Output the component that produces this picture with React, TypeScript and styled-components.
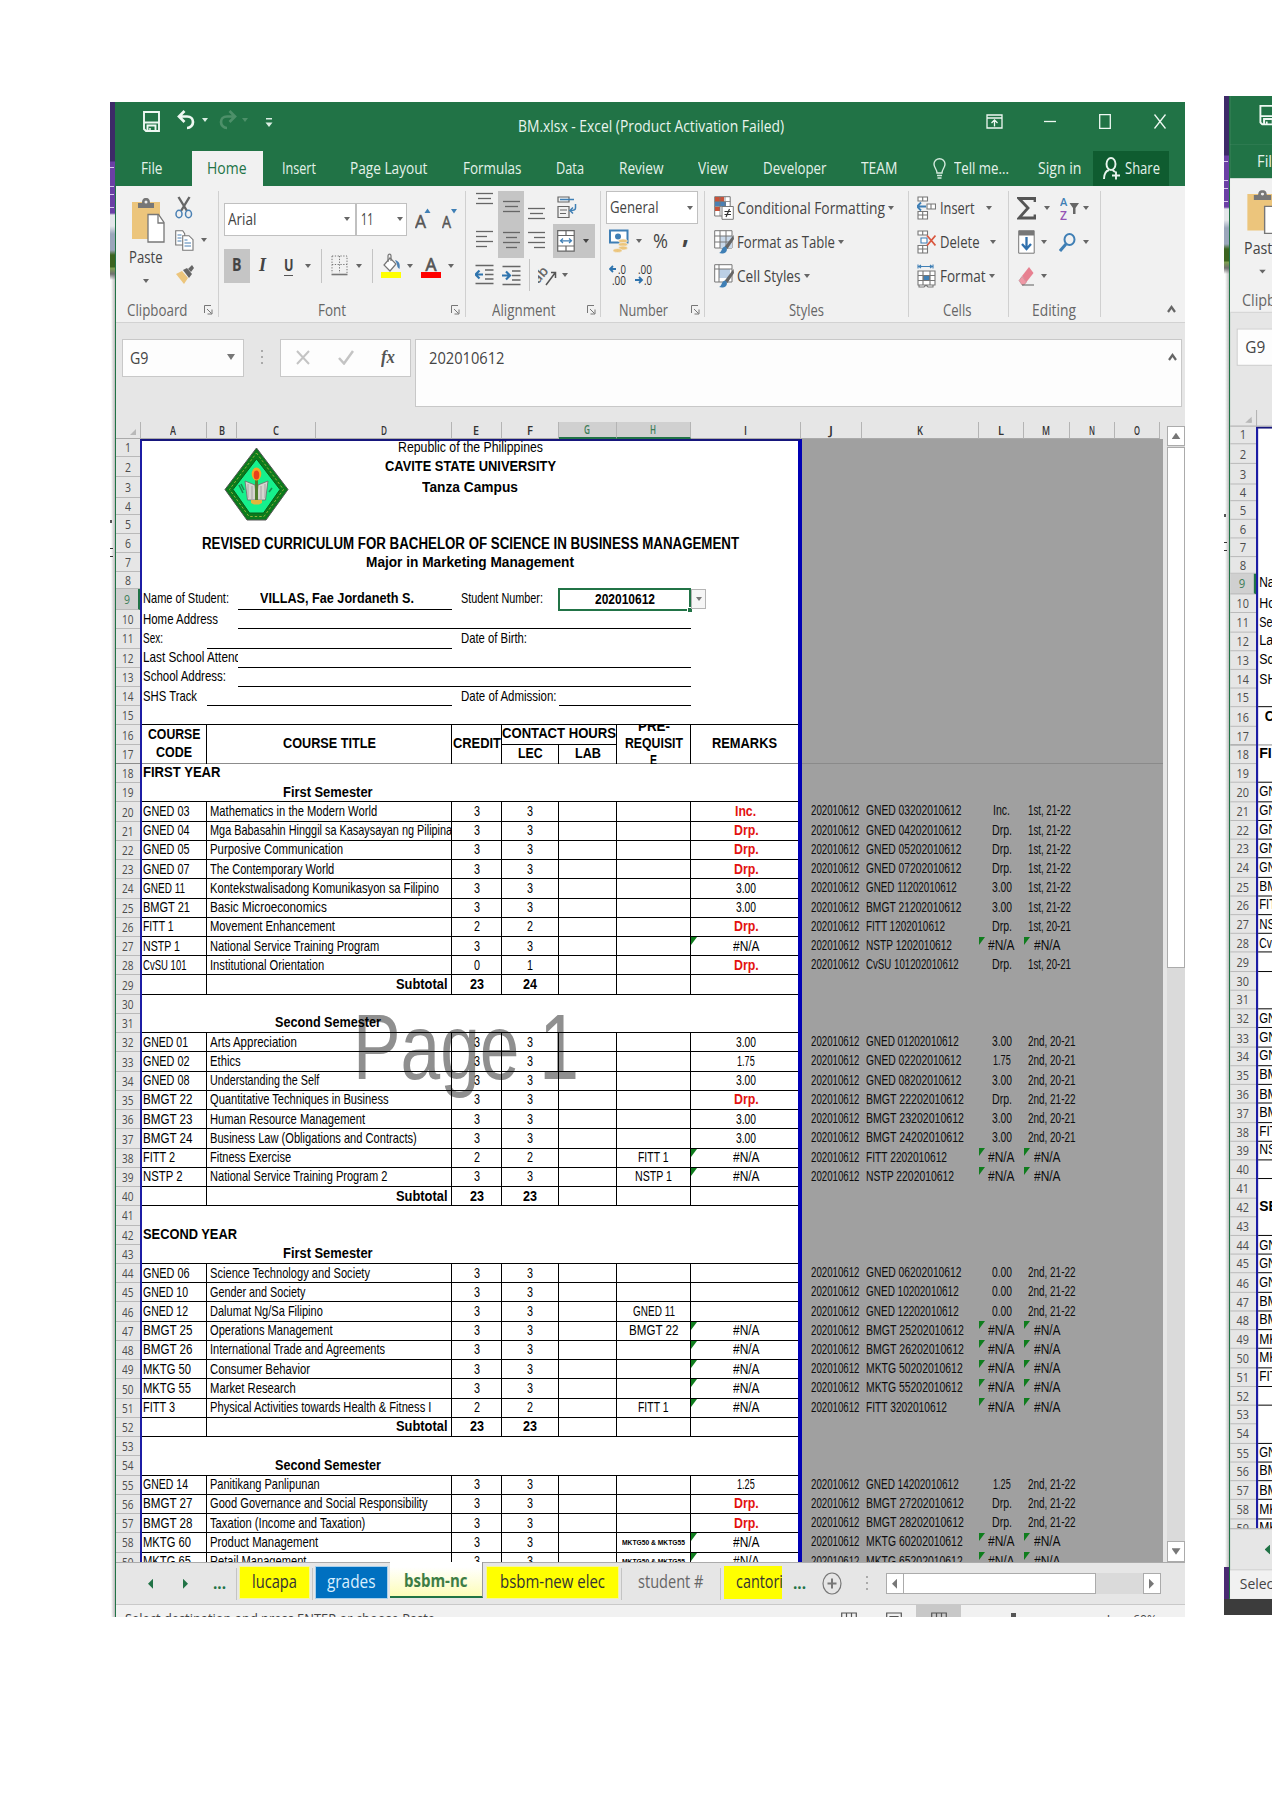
import React, { useLayoutEffect, useRef, useState } from "react";
import styled, { createGlobalStyle, css } from "styled-components";

const UI = `"Open Sans", "Noto Sans", sans-serif`;
const ARIAL = `"Liberation Sans", Arial, sans-serif`;
const GREEN = "#217346";

const Global = createGlobalStyle`
  html, body { margin: 0; background: #fff; overflow: hidden; }
  *, *::before, *::after { box-sizing: border-box; }
  svg { display: block; flex: none; }
`;

/* ---------- text condensed to a given width ---------- */

interface FitProps {
  w: number;
  ml?: number;
  size?: number;
  bold?: boolean;
  color?: string;
  font?: string;
  weight?: number;
  italic?: boolean;
  children: string;
}

const FitBox = styled.span<{ $w: number; $ml: number; $size: number; $weight: number; $color?: string; $font?: string; $italic?: boolean }>`
  display: block;
  flex: none;
  width: ${(p) => p.$w}px;
  margin-left: ${(p) => p.$ml}px;
  font-size: ${(p) => p.$size}px;
  font-weight: ${(p) => p.$weight};
  font-style: ${(p) => (p.$italic ? "italic" : "normal")};
  line-height: 1.2;
  white-space: pre;
  ${(p) => p.$color && css`color: ${p.$color};`}
  ${(p) => p.$font && css`font-family: ${p.$font};`}
`;
const FitText = styled.span`
  display: inline-block;
  transform-origin: 0 50%;
`;

function Fit({ w, ml = 0, size = 15.7, bold, weight, color, font, italic, children }: FitProps) {
  const box = useRef<HTMLSpanElement>(null);
  const text = useRef<HTMLSpanElement>(null);
  const [k, setK] = useState(1);
  useLayoutEffect(() => {
    if (!box.current || !text.current) return;
    const outer = box.current.getBoundingClientRect().width / w;
    const prev = text.current.style.transform;
    text.current.style.transform = "none";
    const natural = text.current.getBoundingClientRect().width / outer;
    text.current.style.transform = prev;
    if (natural > 0) setK(w / natural);
  }, [w, children]);
  return (
    <FitBox ref={box} $w={w} $ml={ml} $size={size} $weight={weight ?? (bold ? 700 : 400)} $color={color} $font={font} $italic={italic}>
      <FitText ref={text} style={{ transform: `scaleX(${k})` }}>{children}</FitText>
    </FitBox>
  );
}

/* ---------- desktop and window frames ---------- */

const Desktop = styled.main`
  display: flex;
  align-items: flex-start;
  width: 1272px;
  height: 1800px;
  padding-top: 96px;
  overflow: hidden;
  background: #fff;
  font-family: ${UI};
`;
const Frame = styled.section<{ $ml: number; $mt: number; $w: number; $h: number; $bg: string }>`
  display: flex;
  flex: none;
  align-items: flex-start;
  width: ${(p) => p.$w}px;
  height: ${(p) => p.$h}px;
  margin: ${(p) => p.$mt}px 0 0 ${(p) => p.$ml}px;
  overflow: hidden;
  background: ${(p) => p.$bg};
`;
const Wallpaper = styled.div<{ $w: number; $tail?: boolean }>`
  flex: none;
  width: ${(p) => p.$w}px;
  height: ${(p) => (p.$tail ? "1503px" : "100%")};
  background:
    ${(p) => p.$tail && "linear-gradient(#4a2a72, #4a2a72) 0 1471px / 100% 32px no-repeat,"}
    linear-gradient(#555, #555) 0 418px / 2px 3px no-repeat,
    linear-gradient(#333, #333) 0 446px / 3px 1px no-repeat,
    linear-gradient(#333, #333) 0 454px / 3px 1px no-repeat,
    linear-gradient(#d9c8ee, #d9c8ee) 0 65px / 4px 1px no-repeat,
    linear-gradient(#d9c8ee, #d9c8ee) 0 84px / 4px 1px no-repeat,
    linear-gradient(#d9c8ee, #d9c8ee) 0 92px / 4px 1px no-repeat,
    linear-gradient(#d9c8ee, #d9c8ee) 0 105px / 4px 1px no-repeat,
    linear-gradient(#3d2a68 0 59px, #6b40a5 60px 111px, #e4e6ea 113px 124px, #9ba6bb 132px 148px, #3c6420 153px 165px, #7fa050 166px, #707070 172px, transparent 178px 100%) 0 0 / 100% 180px no-repeat,
    linear-gradient(90deg, #fff 20%, #bcbcbc);
`;
const Scaler = styled.div<{ $sx: number; $sy: number }>`
  flex: none;
  transform-origin: 0 0;
  transform: scale(${(p) => p.$sx}, ${(p) => p.$sy});
`;
const Window = styled.div`
  display: flex;
  flex-direction: column;
  width: 1070px;
  height: 1532px;
  border-left: 1px solid ${GREEN};
  background: #e6e6e6;
  color: #444;
`;

/* ---------- title bar and ribbon tabs ---------- */

const TitleBar = styled.header`
  display: flex;
  align-items: center;
  flex: none;
  height: 48.5px;
  padding-bottom: 10px;
  background: ${GREEN};
  color: #e9f5ee;
`;
const Item = styled.div<{ $ml?: number; $mt?: number }>`
  flex: none;
  margin-left: ${(p) => p.$ml ?? 0}px;
  margin-top: ${(p) => p.$mt ?? 0}px;
`;
const Caret = styled.i<{ $ml?: number; $c?: string; $s?: number; $mt?: number }>`
  flex: none;
  width: 0;
  height: 0;
  margin-left: ${(p) => p.$ml ?? 0}px;
  margin-top: ${(p) => p.$mt ?? 0}px;
  border: ${(p) => p.$s ?? 3.2}px solid transparent;
  border-top: ${(p) => (p.$s ?? 3.2) * 1.4}px solid ${(p) => p.$c ?? "#666"};
  border-bottom: 0;
`;
const TabStrip = styled.nav`
  display: flex;
  align-items: stretch;
  flex: none;
  height: 35.7px;
  background: ${GREEN};
  color: #e4f2ea;
`;
const RibbonTab = styled.div<{ $w: number; $active?: boolean; $fill?: string; $pr?: number }>`
  display: flex;
  align-items: center;
  justify-content: center;
  flex: none;
  width: ${(p) => p.$w}px;
  padding-right: ${(p) => p.$pr ?? 0}px;
  background: ${(p) => (p.$active ? "#f1f1f1" : p.$fill ?? "transparent")};
  color: ${(p) => (p.$active ? GREEN : "inherit")};
`;

/* ---------- ribbon ---------- */

const Ribbon = styled.div`
  display: flex;
  flex: none;
  height: 137px;
  padding-top: 5px;
  border-bottom: 1.5px solid #d2d2d2;
  background: #f1f1f1;
`;
const Group = styled.section<{ $w: number; $last?: boolean }>`
  display: flex;
  flex-direction: column;
  flex: none;
  width: ${(p) => p.$w}px;
  height: 126px;
  border-right: ${(p) => (p.$last ? 0 : "1px solid #d0d0d0")};
`;
const GroupBody = styled.div`
  display: flex;
  flex: none;
  height: 109.5px;
`;
const GroupLabel = styled.footer`
  display: flex;
  align-items: center;
  height: 20px;
  color: #666;
`;
const ToolCol = styled.div<{ $ml?: number; $w?: number; $center?: boolean }>`
  display: flex;
  flex-direction: column;
  flex: none;
  align-items: ${(p) => (p.$center ? "center" : "stretch")};
  margin-left: ${(p) => p.$ml ?? 0}px;
  ${(p) => p.$w && css`width: ${p.$w}px;`}
`;
const ToolRow = styled.div<{ $h: number; $mt?: number; $pl?: number }>`
  display: flex;
  align-items: center;
  flex: none;
  height: ${(p) => p.$h}px;
  margin-top: ${(p) => p.$mt ?? 0}px;
  padding-left: ${(p) => p.$pl ?? 0}px;
`;
const Combo = styled.div<{ $w: number; $h: number; $pl: number; $ml?: number }>`
  display: flex;
  align-items: center;
  flex: none;
  width: ${(p) => p.$w}px;
  height: ${(p) => p.$h}px;
  margin-left: ${(p) => p.$ml ?? 0}px;
  padding-left: ${(p) => p.$pl}px;
  border: 1px solid #c0c0c0;
  background: #fff;
`;
const Pressed = styled.div<{ $w: number; $h: number; $ml?: number; $pl?: number }>`
  display: flex;
  align-items: center;
  justify-content: ${(p) => (p.$pl ? "flex-start" : "center")};
  flex: none;
  width: ${(p) => p.$w}px;
  height: ${(p) => p.$h}px;
  margin-left: ${(p) => p.$ml ?? 0}px;
  padding-left: ${(p) => p.$pl ?? 0}px;
  background: #c5c5c5;
`;
const Rule = styled.i<{ $ml: number; $h: number }>`
  flex: none;
  width: 1px;
  height: ${(p) => p.$h}px;
  margin-left: ${(p) => p.$ml}px;
  background: #c4c4c4;
`;
const Underlined = styled.div<{ $ml: number }>`
  flex: none;
  margin-left: ${(p) => p.$ml}px;
  border-bottom: 1.5px solid #555;
  line-height: 1;
`;

const Launcher = ({ ml }: { ml: number }) => (
  <Item $ml={ml}>
    <svg width="9" height="10" viewBox="0 0 9 10" fill="none" stroke="#777" strokeWidth="1">
      <path d="M.5 8V.5H7M3 4l4.5 4.5M8 4.5V9H3.5" />
    </svg>
  </Item>
);

const SaveIcon = () => (
  <svg width="17" height="21" viewBox="0 0 17 21" fill="none" stroke="#eef8f2" strokeWidth="1.900">
    <path d="M1 1h15v19H3L1 18zM1.500 11.500h14M4.500 20v-5.500h8V20" />
    <path d="M7 17v3" strokeWidth="1.500" />
  </svg>
);
const UndoIcon = ({ c, flip }: { c: string; flip?: boolean }) => (
  <svg width="18" height="20" viewBox="0 0 18 20" fill="none" stroke={c} strokeWidth="2.700">
    <g transform={flip ? "translate(18 0) scale(-1 1)" : undefined}>
      <path d="M7.500 1 2 6.500 7.500 12M2 6.500h8c4 0 6 2.500 6 5.500s-2.500 6-6 6" />
    </g>
  </svg>
);
const lines = (ws: number[], align: "l" | "c" | "r", gap = 5) => (
  <svg width="17" height={ws.length * gap + 1} stroke="#666" strokeWidth="1.300">
    {ws.map((w, i) => {
      const x = align === "l" ? 0 : align === "c" ? (17 - w) / 2 : 17 - w;
      return <path key={i} d={`M${x} ${i * gap + 1.5}h${w}`} />;
    })}
  </svg>
);
const PasteIcon = () => (
  <svg width="34" height="46" viewBox="0 0 34 46">
    <path d="M1 5h28v37H1z" fill="#ecc57c" />
    <path d="M7 11V6h4c0-3 1-5 4-5s4 2 4 5h4v5z" fill="#777" />
    <circle cx="15" cy="5" r="1.500" fill="#eee" />
    <path d="M17 17.500h10.500l5.500 8V45H17z" fill="#fff" stroke="#777" strokeWidth="1.300" />
    <path d="M27 17.500V26h6" fill="none" stroke="#777" strokeWidth="1.300" />
  </svg>
);
const CutIcon = () => (
  <svg width="18" height="23" viewBox="0 0 18 23" fill="none">
    <path d="M3.500 1 12 15M14.500 1 6 15" stroke="#666" strokeWidth="2.400" />
    <ellipse cx="4" cy="18" rx="3" ry="3.700" stroke="#4a80b4" strokeWidth="1.500" />
    <ellipse cx="13.500" cy="18" rx="3" ry="3.700" stroke="#4a80b4" strokeWidth="1.500" />
  </svg>
);
const CopyIcon = () => (
  <svg width="19" height="21" viewBox="0 0 19 21" fill="#fff" stroke="#777" strokeWidth="1.100">
    <path d="M.7.700h7l2 3V15h-9z" />
    <path d="M7.700 5.700H14l4 4v10.500H7.700z" />
    <path d="M2.500 5h4M2.500 8h4M2.500 11h4M9.500 10h3M9.500 13h6.500M9.500 16h6.500" stroke="#4a80b4" />
  </svg>
);
const BrushIcon = () => (
  <svg width="20" height="20" viewBox="0 0 20 20">
    <path d="M1 10 7 7l6 7-4 6z" fill="#ecc57c" />
    <path d="m8 6 4-2 5 6-3 4z" fill="#666" />
    <path d="m13 5 4-4 2 3-3 4z" fill="#666" />
  </svg>
);
const BordersIcon = () => (
  <svg width="17" height="21" viewBox="0 0 17 21" fill="none" stroke="#777">
    <path d="M1 1h15v17M1 1v17M8.500 1v17M1 9.500h15" strokeDasharray="1.300 1.500" />
    <path d="M.5 19.500h16" strokeWidth="1.600" />
  </svg>
);
const BucketIcon = () => (
  <svg width="20" height="25" viewBox="0 0 20 25">
    <path d="M9 5 15 11 9 18 3 12z" fill="#fff" stroke="#777" strokeWidth="1.200" />
    <path d="M7 9V3c0-2.500 3-2.500 3 0v5" fill="none" stroke="#777" strokeWidth="1.200" />
    <path d="M14 7c4 1 5.500 4 4.500 9-2-1-2.500-3-2.500-5z" fill="#4a80b4" />
    <path d="M0 19h20v6H0z" fill="#ff0" />
  </svg>
);
const WrapIcon = () => (
  <svg width="20" height="23" viewBox="0 0 20 23" fill="none" stroke="#666" strokeWidth="1.200">
    <path d="M1 1h11v5H1zM1 10.500h11v11H1zM3 14h7M3 17.500h6" />
    <path d="M3 3.500h14M18.500 8v4c0 2-2 2.500-5 2.500M16 11.500l-3 3 3 3" stroke="#3f7fb5" strokeWidth="1.500" />
  </svg>
);
const MergeIcon = () => (
  <svg width="18" height="22" viewBox="0 0 18 22" fill="#fff" stroke="#666" strokeWidth="1.200">
    <path d="M.7.700h16.500v20.500H.7zM.7 5.500h16.500M.7 16h16.500M9 .7v4.800M9 16v5.200" />
    <path d="M3.500 10.800h11M6 8.500l-2.500 2.300L6 13M12 8.500l2.500 2.300L12 13" fill="none" stroke="#3f7fb5" />
  </svg>
);
const IndentIcon = ({ out }: { out?: boolean }) => (
  <svg width="19" height="21" viewBox="0 0 19 21" fill="none" stroke="#666" strokeWidth="1.300">
    <path d="M.5 1.500h18M10 6h8.500M10 10.500h8.500M10 15h8.500M.5 19.500h18" />
    <path d={out ? "M0 10.500h8M4.500 6.500l-4 4 4 4" : "M0 10.500h8M4 6.500l4 4-4 4"} stroke="#2f74ae" strokeWidth="2.200" />
  </svg>
);
const AngleIcon = () => (
  <svg width="20" height="22" viewBox="0 0 20 22">
    <text x="-4" y="13" transform="rotate(-50 6 12)" fontFamily={UI} fontWeight="600" fontSize="14" fill="#666">ab</text>
    <path d="M8 21 17 9M17.500 14V8.500h-4.500" fill="none" stroke="#555" strokeWidth="1.500" />
  </svg>
);
const CashIcon = () => (
  <svg width="20" height="24" viewBox="0 0 20 24">
    <path d="M1 1.500h17.500v12H1z" fill="#fff" stroke="#3f7fb5" strokeWidth="2" />
    <circle cx="9" cy="7.500" r="3" fill="#3f7fb5" />
    <g fill="#ecc57c" stroke="#f1f1f1" strokeWidth=".6">
      <ellipse cx="14" cy="12" rx="4.500" ry="2" /><ellipse cx="14" cy="15.500" rx="4.500" ry="2" />
      <ellipse cx="14" cy="19" rx="4.500" ry="2" /><ellipse cx="8.500" cy="21.500" rx="4.500" ry="2" />
    </g>
  </svg>
);
const CondIcon = () => (
  <svg width="20" height="24" viewBox="0 0 20 24" stroke="#777">
    <path d="M.7.700h15.500V20H.7z" fill="#fff" />
    <path d="M1 1h9v5H1zM1 11h5v4H1z" fill="#c8523a" stroke="none" />
    <path d="M1 6h11v4H1z" fill="#4a80b4" stroke="none" />
    <path d="M.7 5.500h15.500M.7 10.500h15.500M6 .7V20M11 .7V20" fill="none" strokeWidth=".8" />
    <path d="M8 10.500h11.300v12.800H8z" fill="#fff" />
    <path d="M10.500 15.500h6.500M10.500 18.500h6.500M15.500 13l-3.500 8" stroke="#333" strokeWidth="1.200" />
  </svg>
);
const TableIcon = ({ cell }: { cell?: boolean }) => (
  <svg width="20" height="24" viewBox="0 0 20 24">
    <path d="M.7.700H18V18H.7z" fill="#fff" stroke="#777" />
    {cell ? <path d="M5 5h11v9H5z" fill="#bcd0e6" /> : <path d="M6 6h12v12H6z" fill="#c9d9ea" />}
    <path d={cell ? "M.7 5H18M5 .7V18" : "M.7 6H18M.7 12H18M6 .7V18M12 .7V18"} stroke="#777" fill="none" />
    <path d="m19.500 5-9 12 3 2L20 9z" fill="#666" />
    <path d="M5 23c3-1 2.500-6 6-6.500 3 1 2.500 6-1 6.800-2 .4-3.500.2-5-.3z" fill="#3f7fb5" />
  </svg>
);
const InsertIcon = ({ del }: { del?: boolean }) => (
  <svg width="19" height="24" viewBox="0 0 19 24" fill="#fff" stroke="#777" strokeWidth="1.100">
    <path d="M1 1h9.500v4H1zM5.700 1v4M1 15.500h9.500V23H1zM5.700 15.500V23M1 19h9.500" />
    {del ? (
      <>
        <path d="M4 8h6v5H4z" stroke="#3f7fb5" />
        <path d="m10 5.500 8.500 10M18.500 5.500 10 15.500" stroke="#d9573f" strokeWidth="1.800" />
      </>
    ) : (
      <>
        <path d="M10 8h8.500v5H10zM14 8v5" />
        <path d="M0 10.500h9M4 6.500l-4 4 4 4" stroke="#3f7fb5" fill="none" strokeWidth="1.800" />
      </>
    )}
  </svg>
);
const FormatIcon = () => (
  <svg width="19" height="24" viewBox="0 0 19 24" fill="none" stroke="#777" strokeWidth="1.100">
    <path d="M1 7h17v14H1zM1 11.500h17M1 16.500h17M6 7v14M13 7v14M2 21v2h5l2-2 2 2h5v-2" fill="#fff" />
    <path d="M6.500 11.500h6v5h-6z" fill="#3f7fb5" />
    <path d="M1 .5v4M16 .5v4M1 2.500h15M4 1 2 2.500 4 4M13 1l2 1.500L13 4" stroke="#3f7fb5" />
  </svg>
);
const SigmaIcon = () => (
  <svg width="19" height="23" viewBox="0 0 19 23" fill="none" stroke="#555" strokeWidth="2.800">
    <path d="M18 5V1.500H2L11 11 2 21h16v-3.500" />
  </svg>
);
const SortIcon = () => (
  <svg width="19" height="26" viewBox="0 0 19 26">
    <text x="0" y="11" fontFamily={UI} fontWeight="600" fontSize="11" fill="#3f7fb5">A</text>
    <text x="0" y="25" fontFamily={UI} fontWeight="600" fontSize="12" fill="#9554b5">Z</text>
    <path d="M9.500 8H19l-3.500 5v6h-2.500v-6z" fill="#666" />
  </svg>
);
const FillIcon = () => (
  <svg width="17" height="24" viewBox="0 0 17 24">
    <path d="M.7.700h15.500v22.500H.7z" fill="#fff" stroke="#777" />
    <path d="M1 1h15v4.500H1z" fill="#777" />
    <path d="M8.500 7v12M4 14l4.500 5 4.500-5" fill="none" stroke="#3070ad" strokeWidth="2.300" />
  </svg>
);
const FindIcon = () => (
  <svg width="17" height="19" viewBox="0 0 17 19" fill="none" stroke="#3f7fb5">
    <ellipse cx="10.500" cy="6.500" rx="5" ry="5.500" strokeWidth="2" />
    <path d="m7 11-6 7" strokeWidth="3" />
  </svg>
);
const EraserIcon = () => (
  <svg width="17" height="20" viewBox="0 0 17 20">
    <path d="m4 10 7-9 4.500 6-7 9z" fill="#e78090" />
    <path d="M4 10.500 1 14.500 4 19h2l2.500-3z" fill="#ef98a5" stroke="#b9808a" strokeWidth=".6" />
    <path d="M4 19h12" stroke="#777" strokeWidth="1.200" />
  </svg>
);
const FontSizeIcon = ({ up }: { up?: boolean }) => (
  <svg width="16" height="24" viewBox="0 0 16 24">
    <text x="0" y={21} fontFamily={UI} fontSize={up ? 19 : 16} textLength={up ? 11 : 9} lengthAdjust="spacingAndGlyphs" fill="#555" stroke="#555" strokeWidth=".5">A</text>
    <path d={up ? "m9.500 6 3-4.500 3 4.500z" : "m9 2 3 4.500L15 2z"} fill="#3f7fb5" />
  </svg>
);
const DecimalIcon = ({ inc }: { inc?: boolean }) => (
  <svg width="19" height="23" viewBox="0 0 19 23">
    <g fontFamily={UI} fontSize="12" fill="#333">
      <text x={inc ? 9 : 3} y="9.500" textLength={inc ? 8 : 14} lengthAdjust="spacingAndGlyphs">{inc ? ".0" : ".00"}</text>
      <text x={inc ? 3 : 9} y="21" textLength={inc ? 14 : 8} lengthAdjust="spacingAndGlyphs">{inc ? ".00" : ".0"}</text>
    </g>
    <path d={inc ? "M1 5h6M4 2 1 5l3 3" : "M0 16h7M4 13l3 3-3 3"} fill="none" stroke="#2f74ae" strokeWidth="1.800" />
  </svg>
);
const Chevron = () => (
  <svg width="9" height="8" viewBox="0 0 9 8" fill="none" stroke="#666" strokeWidth="2.200"><path d="m1 7 3.500-5L8 7" /></svg>
);

/* ---------- formula bar ---------- */

const FormulaArea = styled.div`
  display: flex;
  align-items: flex-start;
  flex: none;
  height: 98.700px;
  padding: 16px 0 0 6px;
`;
const FormulaBox = styled.div<{ $w: number; $h: number; $ml: number; $pl: number }>`
  display: flex;
  align-items: flex-start;
  flex: none;
  width: ${(p) => p.$w}px;
  height: ${(p) => p.$h}px;
  margin-left: ${(p) => p.$ml}px;
  padding: 9px 0 0 ${(p) => p.$pl}px;
  border: 1px solid #c8c8c8;
  background: #fdfdfd;
`;
const Dots = styled.i<{ $ml: number; $mt?: number }>`
  flex: none;
  width: 2px;
  height: 15px;
  margin: ${(p) => p.$mt ?? 0}px 0 0 ${(p) => p.$ml}px;
  background: repeating-linear-gradient(#aaa 0 2px, transparent 2px 6px);
`;

/* ---------- sheet ---------- */

const PITCH = 19.24;
const COLS = "65px 30.5px 79px 135.5px 50px 57px 58px 74px 107px";
const INK = "#000";

const SheetArea = styled.div`
  display: flex;
  flex: none;
  height: 1140.3px;
  overflow: hidden;
`;
const SheetMain = styled.div`
  display: flex;
  flex-direction: column;
  width: 1048px;
  height: 100%;
`;
const ColumnHeads = styled.div`
  display: flex;
  flex: none;
  height: 17px;
`;
const ColumnHead = styled.div<{ $w: number; $on?: boolean }>`
  display: flex;
  align-items: center;
  justify-content: center;
  flex: none;
  width: ${(p) => p.$w}px;
  padding-top: 2px;
  border-right: 1px solid #b4b4b4;
  border-bottom: ${(p) => (p.$on ? `2px solid ${GREEN}` : "1px solid #aaa")};
  background: ${(p) => (p.$on ? "#d0d0d0" : "transparent")};
  color: ${(p) => (p.$on ? "#3d7d59" : "#333")};
`;
const Corner = styled(ColumnHead)`
  justify-content: flex-end;
  padding: 4px 4px 0 0;
  &::after { content: ""; border: 3px solid #b8b8b8; border-top-color: transparent; border-left-color: transparent; }
`;
const SheetBody = styled.div`
  display: flex;
  flex: 1;
  min-height: 0;
  overflow: hidden;
  font-family: ${ARIAL};
  color: #000;
`;
const RowHeads = styled.div`
  flex: none;
  width: 24px;
  font-family: ${UI};
`;
const RowHead = styled.div<{ $h: number; $on?: boolean; $freeze?: boolean }>`
  display: flex;
  align-items: center;
  justify-content: center;
  height: ${(p) => p.$h}px;
  padding-top: 2px;
  border-bottom: 1px solid ${(p) => (p.$freeze ? "#8c8c8c" : "#b9b9b9")};
  border-right: ${(p) => (p.$on ? `2px solid ${GREEN}` : 0)};
  background: ${(p) => (p.$on ? "#d0d0d0" : "transparent")};
  color: ${(p) => (p.$on ? "#3d7d59" : "#4c4c4c")};
`;
const Printed = styled.div`
  position: relative;
  flex: none;
  width: 662px;
  border-top: 2px solid #16167c;
  border-left: 2px solid #1c1ca4;
  border-right: 4px solid #0000b4;
  background: #fff;
`;
const Watermark = styled.div`
  position: absolute;
  left: 211px;
  top: 551px;
`;
const Seal = styled.div`
  position: absolute;
  left: 82px;
  top: 6px;
`;
const Rows = styled.div`
  position: relative;
  margin-top: -2px;
`;
const SheetRow = styled.div<{ $h: number }>`
  display: grid;
  grid-template-columns: ${COLS};
  height: ${(p) => p.$h}px;
`;
const Cell = styled.div<{ $span?: number; $align?: "center" | "end"; $pl?: number; $pr?: number; $right?: boolean; $line?: boolean; $clip?: boolean }>`
  display: flex;
  position: relative;
  align-items: center;
  justify-content: ${(p) => (p.$align === "center" ? "center" : p.$align === "end" ? "flex-end" : "flex-start")};
  grid-column: span ${(p) => p.$span ?? 1};
  min-width: 0;
  padding: 0 ${(p) => p.$pr ?? 0}px ${(p) => (p.$line ? 0 : 1)}px ${(p) => p.$pl ?? 0}px;
  overflow: ${(p) => (p.$clip ? "hidden" : "visible")};
  border-right: ${(p) => (p.$right ? `1px solid ${INK}` : 0)};
  border-bottom: ${(p) => (p.$line ? `1px solid ${INK}` : 0)};
`;
const Selected = styled(Cell)`
  margin: -1px 0 -1px -1px;
  padding-bottom: 0;
  border: 2px solid ${GREEN};
  &::after { content: ""; position: absolute; right: -3px; bottom: -3px; width: 5px; height: 5px; background: ${GREEN}; border-left: 1px solid #fff; border-top: 1px solid #fff; }
`;
const DropButton = styled.div`
  display: flex;
  align-items: center;
  justify-content: center;
  width: 15px;
  height: 20px;
  border: 1px solid #b5b5b5;
  background: #f6f6f6;
`;
const HeadGrid = styled.div`
  display: grid;
  grid-template-columns: ${COLS};
  grid-template-rows: 19.24px 19.24px;
  border-bottom: 1px solid #8c8c8c;
  height: 38.48px;
`;
const HeadCell = styled.div<{ $c: string; $r: string; $last?: boolean; $line?: boolean }>`
  display: flex;
  flex-direction: column;
  align-items: center;
  justify-content: center;
  grid-column: ${(p) => p.$c};
  grid-row: ${(p) => p.$r};
  min-width: 0;
  min-height: 0;
  padding-bottom: 2px;
  overflow: hidden;
  border-right: ${(p) => (p.$last ? 0 : `1px solid ${INK}`)};
  border-bottom: ${(p) => (p.$line ? `1px solid ${INK}` : 0)};
`;
const ErrorMark = styled.i`
  position: absolute;
  left: 0;
  top: 0;
  border-top: 8px solid #0f7d1d;
  border-right: 6px solid transparent;
`;
const Outside = styled.div`
  flex: none;
  width: 361px;
  background: #a0a0a0;
  color: #0c0c0c;
`;
const FrozenPart = styled.div`
  height: 325px;
  border-bottom: 1px solid #8a8a8a;
  margin-bottom: 38px;
`;
const OutRow = styled.div`
  display: grid;
  grid-template-columns: 60.5px 116px 45.5px 45.700px;
  height: ${PITCH}px;
`;

const ROW_H = [17.8, 20.7, 20.7, 16.6, 19, 19.4, 19, 17, 21];
const rowHeight = (n: number) => ROW_H[n - 1] ?? PITCH;

interface Course {
  code: string;
  title: string;
  tw: number;
  units: number;
  lec?: number;
  pre?: string;
  grade: string;
  shown?: boolean;
  term?: string;
}
type Line = { n: number } & (
  | { kind: "blank" }
  | { kind: "year"; text: string; w: number }
  | { kind: "sem"; text: string; w: number }
  | { kind: "total"; units: string; lec: string }
  | { kind: "course"; c: Course }
);

const course = (n: number, code: string, title: string, tw: number, units: number, grade: string, term?: string, extra: Partial<Course> = {}): Line => ({
  n, kind: "course", c: { code, title, tw: tw / 2.8, units, grade, term, ...extra },
});
const NA = "#N/A";

const LINES: Line[] = [
  { n: 18, kind: "year", text: "FIRST YEAR", w: 77.5 },
  { n: 19, kind: "sem", text: "First Semester", w: 89.6 },
  course(20, "GNED 03", "Mathematics in the Modern World", 468, 3, "Inc.", "1st, 21-22"),
  course(21, "GNED 04", "Mga Babasahin Hinggil sa Kasaysayan ng Pilipina", 678, 3, "Drp.", "1st, 21-22"),
  course(22, "GNED 05", "Purposive Communication", 373, 3, "Drp.", "1st, 21-22"),
  course(23, "GNED 07", "The Contemporary World", 348, 3, "Drp.", "1st, 21-22"),
  course(24, "GNED 11", "Kontekstwalisadong Komunikasyon sa Filipino", 641, 3, "3.00", "1st, 21-22"),
  course(25, "BMGT 21", "Basic Microeconomics", 327, 3, "3.00", "1st, 21-22"),
  course(26, "FITT 1", "Movement Enhancement", 350, 2, "Drp.", "1st, 20-21"),
  course(27, "NSTP 1", "National Service Training Program", 474, 3, NA),
  course(28, "CvSU 101", "Institutional Orientation", 320, 0, "Drp.", "1st, 20-21", { lec: 1 }),
  { n: 29, kind: "total", units: "23", lec: "24" },
  { n: 30, kind: "blank" },
  { n: 31, kind: "sem", text: "Second Semester", w: 106 },
  course(32, "GNED 01", "Arts Appreciation", 243, 3, "3.00", "2nd, 20-21"),
  course(33, "GNED 02", "Ethics", 86, 3, "1.75", "2nd, 20-21"),
  course(34, "GNED 08", "Understanding the Self", 306, 3, "3.00", "2nd, 20-21"),
  course(35, "BMGT 22", "Quantitative Techniques in Business", 500, 3, "Drp.", "2nd, 21-22"),
  course(36, "BMGT 23", "Human Resource Management", 434, 3, "3.00", "2nd, 20-21"),
  course(37, "BMGT 24", "Business Law (Obligations and Contracts)", 579, 3, "3.00", "2nd, 20-21"),
  course(38, "FITT 2", "Fitness Exercise", 227, 2, NA, undefined, { pre: "FITT 1" }),
  course(39, "NSTP 2", "National Service Training Program 2", 497, 3, NA, undefined, { pre: "NSTP 1" }),
  { n: 40, kind: "total", units: "23", lec: "23" },
  { n: 41, kind: "blank" },
  { n: 42, kind: "year", text: "SECOND YEAR", w: 94 },
  { n: 43, kind: "sem", text: "First Semester", w: 89.6 },
  course(44, "GNED 06", "Science Technology and Society", 448, 3, "0.00", "2nd, 21-22", { shown: false }),
  course(45, "GNED 10", "Gender and Society", 267, 3, "0.00", "2nd, 21-22", { shown: false }),
  course(46, "GNED 12", "Dalumat Ng/Sa Filipino", 316, 3, "0.00", "2nd, 21-22", { shown: false, pre: "GNED 11" }),
  course(47, "BMGT 25", "Operations Management", 343, 3, NA, undefined, { pre: "BMGT 22" }),
  course(48, "BMGT 26", "International Trade and Agreements", 490, 3, NA),
  course(49, "MKTG 50", "Consumer Behavior", 280, 3, NA),
  course(50, "MKTG 55", "Market Research", 240, 3, NA),
  course(51, "FITT 3", "Physical Activities towards Health & Fitness I", 620, 2, NA, undefined, { pre: "FITT 1" }),
  { n: 52, kind: "total", units: "23", lec: "23" },
  { n: 53, kind: "blank" },
  { n: 54, kind: "sem", text: "Second Semester", w: 106 },
  course(55, "GNED 14", "Panitikang Panlipunan", 307, 3, "1.25", "2nd, 21-22"),
  course(56, "BMGT 27", "Good Governance and Social Responsibility", 609, 3, "Drp.", "2nd, 21-22"),
  course(57, "BMGT 28", "Taxation (Income and Taxation)", 435, 3, "Drp.", "2nd, 21-22"),
  course(58, "MKTG 60", "Product Management", 303, 3, NA, undefined, { pre: "MKTG50 & MKTG55" }),
  course(59, "MKTG 65", "Retail Management", 270, 3, NA, undefined, { pre: "MKTG50 & MKTG55" }),
];

const CODE_W: Record<string, number> = { GNED: 46.500, BMGT: 49.500, FITT: 32, NSTP: 39.500, CvSU: 45, MKTG: 48 };
const codeWidth = (c: string) => (c === "GNED 11" ? 42 : c === "BMGT 21" ? 47 : c === "FITT 1" ? 30.5 : c === "NSTP 1" ? 37 : /(01|10|12|14)$/.test(c) ? CODE_W[c.slice(0, 4)] - 1.5 : CODE_W[c.slice(0, 4)]);
const KEY_W: Record<string, number> = { GNED: 95.5, BMGT: 98, FITT: 81, NSTP: 88, CvSU: 92.700, MKTG: 96.700 };
const keyWidth = (c: string) => (c === "GNED 11" ? 90.7 : c === "BMGT 21" ? 95.5 : c === "FITT 1" ? 79 : c === "NSTP 1" ? 86 : /GNED (01|10|12|14)$/.test(c) ? 92.7 : KEY_W[c.slice(0, 4)]);
const GRADE_W: Record<string, number> = { "Inc.": 17, "Drp.": 20, "3.00": 20, "0.00": 20, "1.75": 17.700, "1.25": 17.700, "#N/A": 26.600 };
const T = 14.3;

function Grade({ g }: { g: string }) {
  const failed = g === "Inc." || g === "Drp.";
  return <Fit w={GRADE_W[g] * (failed ? 1.24 : 1)} size={T} bold={failed} color={failed ? "#e3120f" : undefined}>{g}</Fit>;
}

function SheetLine({ line }: { line: Line }) {
  switch (line.kind) {
    case "blank":
      return <SheetRow $h={PITCH} />;
    case "year":
      return <SheetRow $h={PITCH}><Cell $span={9} $pl={1}><Fit w={line.w} size={T} bold>{line.text}</Fit></Cell></SheetRow>;
    case "sem":
      return (
        <SheetRow $h={PITCH}>
          <Cell $line />
          <Cell $span={3} $align="center" $pr={3} $line><Fit w={line.w} size={T} bold>{line.text}</Fit></Cell>
          <Cell $span={5} $line />
        </SheetRow>
      );
    case "total":
      return (
        <SheetRow $h={PITCH}>
          <Cell $line $right />
          <Cell $span={3} $align="end" $pr={3.5} $line $right><Fit w={51.5} size={T} bold>Subtotal</Fit></Cell>
          <Cell $align="center" $line $right><Fit w={14} size={T} bold>{line.units}</Fit></Cell>
          <Cell $align="center" $line $right><Fit w={14} size={T} bold>{line.lec}</Fit></Cell>
          <Cell $line $right /><Cell $line $right /><Cell $line />
        </SheetRow>
      );
    case "course": {
      const { c } = line;
      const tiny = !!c.pre && c.pre.length > 8;
      return (
        <SheetRow $h={PITCH}>
          <Cell $pl={0.5} $line $right><Fit w={codeWidth(c.code)} size={T}>{c.code}</Fit></Cell>
          <Cell $span={3} $pl={3} $line $right $clip><Fit w={c.tw} size={T}>{c.title}</Fit></Cell>
          <Cell $align="center" $line $right><Fit w={6} size={T}>{String(c.units)}</Fit></Cell>
          <Cell $align="center" $line $right><Fit w={6} size={T}>{String(c.lec ?? c.units)}</Fit></Cell>
          <Cell $line $right />
          <Cell $align="center" $line $right>{c.pre && <Fit w={tiny ? 63 : codeWidth(c.pre)} size={tiny ? 8 : T} bold={tiny}>{c.pre}</Fit>}</Cell>
          <Cell $align="center" $pl={3} $line>{c.grade === NA && <ErrorMark />}{c.shown !== false && <Grade g={c.grade} />}</Cell>
        </SheetRow>
      );
    }
  }
}

const SealIcon = () => (
  <svg width="65" height="74" viewBox="0 0 65 74">
    <path d="M32.500 1 64 42.500 42 73H23L1 42.500z" fill="#0b7a1c" stroke="#555" strokeWidth="1" />
    <path d="M32.500 6 59.500 42.500 40 69.500H25L5.500 42.500z" fill="none" stroke="#8fb03a" strokeWidth="1" strokeDasharray="2.500 2" />
    <path d="M32.500 12 56 42.500 39.500 66H25.500L9 42.500z" fill="#16f08c" stroke="#0a5c18" strokeWidth="1" />
    <path d="M21 34l10 4 1.500 15h-9zM44 34l-10 4-1.500 15h9z" fill="#d5d5cf" stroke="#6a6a6a" strokeWidth=".8" />
    <path d="M24 37v14M28 39v13M37 39v13M41 37v14" stroke="#999" strokeWidth=".8" />
    <path d="M31 33h3v20h-3z" fill="#4f7d2c" />
    <ellipse cx="32.500" cy="27" rx="4.800" ry="6.500" fill="#f7a823" />
    <ellipse cx="32.500" cy="28" rx="2.800" ry="4.500" fill="#e8411b" />
    <path d="M27 53h11v3l-3 1.500h-5L27 56z" fill="#e4b53a" />
    <path d="m15 38 4 8M17 37l3 6M48 41l-3 4" stroke="#1d8c52" strokeWidth="1.600" />
  </svg>
);

interface FormField { n: number; label: string; lw: number; from: 1 | 2; to: 4 | 8; second?: string; sw?: number; tail?: boolean; clip?: boolean }
const FIELDS: FormField[] = [
  { n: 10, label: "Home Address", lw: 75, from: 2, to: 8 },
  { n: 11, label: "Sex:", lw: 20, from: 1, to: 4, second: "Date of Birth:", sw: 66 },
  { n: 12, label: "Last School Attend", lw: 98, from: 2, to: 8, clip: true },
  { n: 13, label: "School Address:", lw: 83, from: 2, to: 8 },
  { n: 14, label: "SHS Track", lw: 54, from: 1, to: 4, second: "Date of Admission:", sw: 95.5, tail: true },
];

function Sheet() {
  const centered = (n: number, text?: string, w = 0, size = T, bold = true) => (
    <SheetRow $h={rowHeight(n)}><Cell $span={9} $align="center">{text && <Fit w={w} size={size} bold={bold}>{text}</Fit>}</Cell></SheetRow>
  );
  return (
    <Printed>
      <Watermark><Fit w={226} size={92} color="#8f8f8f">Page 1</Fit></Watermark>
      <Rows>
        {centered(1, "Republic of the Philippines", 145, T, false)}
        {centered(2, "CAVITE STATE UNIVERSITY", 171, 14.5)}
        {centered(3, "Tanza Campus", 96, 15)}
        {centered(4)}
        {centered(5)}
        {centered(6, "REVISED CURRICULUM FOR BACHELOR OF SCIENCE IN BUSINESS MANAGEMENT", 537, 16)}
        {centered(7, "Major in Marketing Management", 208, 15)}
        {centered(8)}
        <SheetRow $h={rowHeight(9)}>
          <Cell $span={2} $pl={1}><Fit w={86} size={T}>Name of Student:</Fit></Cell>
          <Cell $span={2} $pl={22} $line><Fit w={154} size={T} bold>VILLAS, Fae Jordaneth S.</Fit></Cell>
          <Cell $span={2} $pl={9}><Fit w={82} size={T}>Student Number:</Fit></Cell>
          <Selected $span={2} $align="center"><Fit w={60} size={T} bold>202010612</Fit></Selected>
          <Cell><DropButton><Caret $s={3} $c="#777" /></DropButton></Cell>
        </SheetRow>
        {FIELDS.map((f) => (
          <SheetRow key={f.n} $h={PITCH}>
            <Cell $span={f.from} $pl={1} $clip={f.clip}><Fit w={f.lw} size={T}>{f.label}</Fit></Cell>
            <Cell $span={f.to - f.from} $line />
            {f.to === 4 && <Cell $span={2} $pl={9}><Fit w={f.sw ?? 0} size={T}>{f.second ?? ""}</Fit></Cell>}
            {f.to === 4 && <Cell $span={2} $line={f.tail} />}
            <Cell />
          </SheetRow>
        ))}
        <SheetRow $h={PITCH}><Cell $span={9} $line /></SheetRow>
        <HeadGrid>
          <HeadCell $c="1" $r="1 / 3"><Fit w={52.5} size={14.5} bold>COURSE</Fit><Fit w={36} size={14.5} bold>CODE</Fit></HeadCell>
          <HeadCell $c="2 / 5" $r="1 / 3"><Fit w={93} size={T} bold>COURSE TITLE</Fit></HeadCell>
          <HeadCell $c="5" $r="1 / 3"><Fit w={48} size={T} bold>CREDIT</Fit></HeadCell>
          <HeadCell $c="6 / 8" $r="1" $line><Fit w={114} size={T} bold>CONTACT HOURS</Fit></HeadCell>
          <HeadCell $c="6" $r="2"><Fit w={24.6} size={T} bold>LEC</Fit></HeadCell>
          <HeadCell $c="7" $r="2"><Fit w={26} size={T} bold>LAB</Fit></HeadCell>
          <HeadCell $c="8" $r="1 / 3"><Fit w={32} size={T} bold>PRE-</Fit><Fit w={58} size={T} bold>REQUISIT</Fit><Fit w={7} size={T} bold>E</Fit></HeadCell>
          <HeadCell $c="9" $r="1 / 3" $last><Fit w={65} size={T} bold>REMARKS</Fit></HeadCell>
        </HeadGrid>
        {LINES.map((l) => <SheetLine key={l.n} line={l} />)}
      </Rows>
      <Seal><SealIcon /></Seal>
    </Printed>
  );
}

function SideData() {
  return (
    <Outside>
      <FrozenPart />
      {LINES.filter((l) => l.n >= 20).map((l) =>
        l.kind !== "course" ? <OutRow key={l.n} /> : (
          <OutRow key={l.n}>
            <Cell $pl={8.7}><Fit w={48.5} size={T}>202010612</Fit></Cell>
            <Cell $pl={3.5}><Fit w={keyWidth(l.c.code)} size={T}>{l.c.code + "202010612"}</Fit></Cell>
            <Cell $align="center" $pl={1}>{l.c.grade === NA && <ErrorMark />}<Fit w={GRADE_W[l.c.grade]} size={T}>{l.c.grade}</Fit></Cell>
            {l.c.term
              ? <Cell $pl={3.5}><Fit w={l.c.term[0] === "1" ? 43 : 47.5} size={T}>{l.c.term}</Fit></Cell>
              : <Cell $align="center" $pl={1}><ErrorMark /><Fit w={26.6} size={T}>{NA}</Fit></Cell>}
          </OutRow>
        ),
      )}
    </Outside>
  );
}

const VScroll = styled.div`
  display: flex;
  flex-direction: column;
  flex: none;
  width: 18px;
  height: 1136px;
  margin: 4px 0 0 3px;
  background: #dadada;
`;
const ScrollButton = styled.div<{ $w: number; $h: number }>`
  display: flex;
  align-items: center;
  justify-content: center;
  flex: none;
  width: ${(p) => p.$w}px;
  height: ${(p) => p.$h}px;
  border: 1px solid #ababab;
  background: #fff;
`;
const VThumb = styled.div`
  flex: none;
  height: 521px;
  margin: 1px 0 auto;
  border: 1px solid #ababab;
  background: #fff;
`;
const Tri = styled.i<{ $d: "l" | "r" | "u" | "d"; $c?: string; $ml?: number; $s?: number }>`
  flex: none;
  width: ${(p) => ("lr".includes(p.$d) ? (p.$s ?? 5) : (p.$s ?? 5) * 1.800)}px;
  height: ${(p) => ("lr".includes(p.$d) ? (p.$s ?? 5) * 2 : (p.$s ?? 5) * 1.300)}px;
  margin-left: ${(p) => p.$ml ?? 0}px;
  background: ${(p) => p.$c ?? "#777"};
  clip-path: polygon(${(p) => ({ l: "100% 0, 100% 100%, 0 50%", r: "0 0, 100% 50%, 0 100%", u: "50% 0, 100% 100%, 0 100%", d: "0 0, 100% 0, 50% 100%" })[p.$d]});
`;

/* ---------- sheet tabs and status bar ---------- */

const TabBar = styled.div`
  display: flex;
  align-items: center;
  flex: none;
  height: 43px;
  border-top: 1px solid #ababab;
  border-bottom: 1px solid #c9c9c9;
`;
const SheetTab = styled.div<{ $w: number; $ml: number; $bg?: string; $pl?: number; $edge?: string }>`
  display: flex;
  align-items: center;
  justify-content: ${(p) => (p.$pl ? "flex-start" : "center")};
  align-self: flex-start;
  flex: none;
  width: ${(p) => p.$w}px;
  height: 33px;
  margin: 3px 0 0 ${(p) => p.$ml}px;
  padding: 0 0 2px ${(p) => p.$pl ?? 0}px;
  overflow: hidden;
  background: ${(p) => p.$bg ?? "transparent"};
  ${(p) => p.$edge && css`box-shadow: inset 0 0 0 1px ${p.$edge};`}
`;
const ActiveTab = styled(SheetTab)`
  height: 36px;
  margin-top: -1px;
  padding: 3px 0 0;
  border-right: 1px solid #999;
  border-bottom: 2px solid ${GREEN};
  background: linear-gradient(#fff 15%, #fdfdb8);
`;
const HScroll = styled.div`
  display: flex;
  flex: none;
  height: 21px;
  width: 275px;
  margin-left: 18px;
  background: #dadada;
`;
const HThumb = styled.div`
  width: 193px;
  margin: 0 auto 0 -1px;
  border: 1px solid #ababab;
  background: #fff;
`;
const StatusBar = styled.footer`
  display: flex;
  align-items: center;
  flex: 1;
  background: #f1f1f1;
  color: #444;
`;
const ViewButton = styled.div<{ $ml: number; $w: number; $on?: boolean }>`
  display: flex;
  align-items: center;
  justify-content: center;
  flex: none;
  align-self: stretch;
  width: ${(p) => p.$w}px;
  margin-left: ${(p) => p.$ml}px;
  background: ${(p) => (p.$on ? "#c8c8c8" : "transparent")};
`;
const Slider = styled.i`
  flex: none;
  width: 5px;
  height: 14px;
  margin-left: 50px;
  background: #555;
`;

const COL_HEADS: [string, number][] = [["A", 66.3], ["B", 30.5], ["C", 79.1], ["D", 135.4], ["E", 49.8], ["F", 57], ["G", 58], ["H", 74.2], ["I", 110], ["J", 61.7], ["K", 116.1], ["L", 45.4], ["M", 45.7], ["N", 45.1], ["O", 45.6]];

function Excel() {
  return (
    <Window>
      <TitleBar>
        <Item $ml={26.500}><SaveIcon /></Item>
        <Item $ml={17} $mt={-2}><UndoIcon c="#eef8f2" /></Item>
        <Caret $ml={7} $c="#dcefe4" $mt={-3} />
        <Item $ml={11} $mt={-2}><UndoIcon c="#4d9069" flip /></Item>
        <Caret $ml={5} $c="#4d9069" $mt={-3} />
        <Item $ml={17} $mt={3}>
          <svg width="8" height="10" viewBox="0 0 8 10"><path d="M1 0h6v1.500H1zM.5 4.500h7L4 9z" fill="#dcefe4" /></svg>
        </Item>
        <Item $ml={245} $mt={10}><Fit w={266} size={15.7}>BM.xlsx - Excel (Product Activation Failed)</Fit></Item>
        <Item $ml={202.500}>
          <svg width="17" height="15" viewBox="0 0 17 15" fill="none" stroke="#eef8f2" strokeWidth="1.300"><path d="M1 1h15v13H1zM1 4h15M8.500 12.500V6.500M5.500 9l3-3 3 3" /></svg>
        </Item>
        <Item $ml={41}><svg width="12" height="3"><path d="M0 1.500h12" stroke="#eef8f2" strokeWidth="1.300" /></svg></Item>
        <Item $ml={43}><svg width="12" height="15"><path d="M.7.700h10.600v13.600H.7z" fill="none" stroke="#eef8f2" strokeWidth="1.300" /></svg></Item>
        <Item $ml={43}><svg width="12" height="15"><path d="m.5.500 11 14M11.500.500l-11 14" stroke="#eef8f2" strokeWidth="1.300" /></svg></Item>
      </TitleBar>
      <TabStrip>
        <RibbonTab $w={75.500} $pr={5}><Fit w={21.5}>File</Fit></RibbonTab>
        <RibbonTab $w={71.500} $active $pr={1}><Fit w={39.5}>Home</Fit></RibbonTab>
        <RibbonTab $w={71}><Fit w={34}>Insert</Fit></RibbonTab>
        <RibbonTab $w={110}><Fit w={77.5}>Page Layout</Fit></RibbonTab>
        <RibbonTab $w={96}><Fit w={58.5}>Formulas</Fit></RibbonTab>
        <RibbonTab $w={61} $pr={1}><Fit w={28}>Data</Fit></RibbonTab>
        <RibbonTab $w={81}><Fit w={44.5}>Review</Fit></RibbonTab>
        <RibbonTab $w={62}><Fit w={30}>View</Fit></RibbonTab>
        <RibbonTab $w={101}><Fit w={63.5}>Developer</Fit></RibbonTab>
        <RibbonTab $w={69}><Fit w={36.5}>TEAM</Fit></RibbonTab>
        <RibbonTab $w={113}>
          <svg width="13" height="21" viewBox="0 0 13 21" fill="none" stroke="#d4eadd" strokeWidth="1.400"><path d="M4 15c0-4-3-5-3-9a5.300 5 0 0 1 11 0c0 4-3 5-3 9zM4 17.500h5M4.500 20h4" /></svg>
          <Fit w={55} ml={8}>Tell me...</Fit>
        </RibbonTab>
        <RibbonTab $w={66}><Fit w={43.5}>Sign in</Fit></RibbonTab>
        <RibbonTab $w={76} $fill="#0f5c30">
          <svg width="17" height="23" viewBox="0 0 17 23" fill="none" stroke="#e9f5ee" strokeWidth="1.900"><ellipse cx="8" cy="7" rx="4.500" ry="6" /><path d="M1 22c0-5 2-8 5-9M9.500 13l2.500 2M9 18.500h8M13 14.500v8" /></svg>
          <Fit w={35} ml={5}>Share</Fit>
        </RibbonTab>
      </TabStrip>
      <Ribbon>
        <Group $w={102.500}>
          <GroupBody>
            <ToolCol $ml={11} $w={38} $center>
              <Item $mt={6} $ml={4}><PasteIcon /></Item>
              <Item $mt={5}><Fit w={33.5}>Paste</Fit></Item>
              <Caret $mt={12} />
            </ToolCol>
            <ToolCol $ml={10}>
              <ToolRow $h={30} $mt={1}><CutIcon /></ToolRow>
              <ToolRow $h={36}><CopyIcon /><Caret $ml={7} /></ToolRow>
              <ToolRow $h={31}><BrushIcon /></ToolRow>
            </ToolCol>
          </GroupBody>
          <GroupLabel><Fit w={60.5} ml={10.7}>Clipboard</Fit><Launcher ml={17} /></GroupLabel>
        </Group>
        <Group $w={247.700}>
          <GroupBody>
            <ToolCol $ml={5}>
              <ToolRow $h={33} $mt={11.500}>
                <Combo $w={132.5} $h={33} $pl={3}><Fit w={28.5}>Arial</Fit><Caret $ml={88} /></Combo>
                <Combo $w={51} $h={33} $pl={4}><Fit w={12.5}>11</Fit><Caret $ml={23} /></Combo>
                <Item $ml={8}><FontSizeIcon up /></Item>
                <Item $ml={11}><FontSizeIcon /></Item>
              </ToolRow>
              <ToolRow $h={34} $mt={13}>
                <Pressed $w={26} $h={34}><Fit w={9.5} bold size={17}>B</Fit></Pressed>
                <Fit w={7} ml={9} size={18} italic font={`"Liberation Serif", serif`} weight={700}>I</Fit>
                <Underlined $ml={18}><Fit w={9.5} size={16} weight={700}>U</Fit></Underlined>
                <Caret $ml={12} />
                <Rule $ml={10} $h={34} />
                <Item $ml={9}><BordersIcon /></Item>
                <Caret $ml={8} />
                <Rule $ml={10} $h={34} />
                <Item $ml={8}><BucketIcon /></Item>
                <Caret $ml={6} />
                <Item $ml={8}>
                  <svg width="20" height="24" viewBox="0 0 20 24"><text x="4.500" y="17" fontFamily={UI} fontSize="19" fill="#555" textLength="11" lengthAdjust="spacingAndGlyphs" stroke="#555" strokeWidth=".7">A</text><path d="M0 18h20v6H0z" fill="#f00" /></svg>
                </Item>
                <Caret $ml={7} />
              </ToolRow>
            </ToolCol>
          </GroupBody>
          <GroupLabel><Fit w={28} ml={99.500}>Font</Fit><Launcher ml={105} /></GroupLabel>
        </Group>
        <Group $w={135}>
          <GroupBody>
            <ToolCol $ml={5} $w={27} $center>
              <ToolRow $h={17}>{lines([17, 13, 17], "c")}</ToolRow>
              <ToolRow $h={34} $mt={15}>{lines([17, 11, 17, 11], "l")}</ToolRow>
              <ToolRow $h={34}><IndentIcon out /></ToolRow>
            </ToolCol>
            <ToolCol $w={26} $center>
              <Pressed $w={26} $h={33}>{lines([17, 13, 17], "c")}</Pressed>
              <Pressed $w={26} $h={34}>{lines([17, 11, 17, 11], "c")}</Pressed>
              <ToolRow $h={34}><IndentIcon /></ToolRow>
            </ToolCol>
            <ToolCol $ml={3}>
              <ToolRow $h={33} $pl={1}>
                <Item $mt={14}>{lines([17, 13, 17], "c")}</Item>
                <Item $ml={12}><WrapIcon /></Item>
              </ToolRow>
              <ToolRow $h={34} $pl={1}>{lines([17, 11, 17, 11], "r")}<Pressed $w={42} $h={34} $ml={8} $pl={4}><MergeIcon /><Caret $ml={8} $c="#444" /></Pressed></ToolRow>
              <ToolRow $h={34}><Rule $ml={2} $h={32} /><Item $ml={8}><AngleIcon /></Item><Caret $ml={4} /></ToolRow>
            </ToolCol>
          </GroupBody>
          <GroupLabel><Fit w={63.5} ml={25.700}>Alignment</Fit><Launcher ml={32} /></GroupLabel>
        </Group>
        <Group $w={104}>
          <GroupBody>
            <ToolCol $ml={4.700}>
              <ToolRow $h={33}><Combo $w={92.5} $h={33} $pl={3}><Fit w={48.5}>General</Fit><Caret $ml={29} /></Combo></ToolRow>
              <ToolRow $h={34} $pl={3}><CashIcon /><Caret $ml={7} /><Fit w={15} ml={11} size={20}>%</Fit><Item $ml={14} $mt={-16}><Fit w={7} size={28} bold>,</Fit></Item></ToolRow>
              <ToolRow $h={34} $pl={3}><DecimalIcon inc /><Item $ml={7}><DecimalIcon /></Item></ToolRow>
            </ToolCol>
          </GroupBody>
          <GroupLabel><Fit w={49} ml={17.5}>Number</Fit><Launcher ml={23} /></GroupLabel>
        </Group>
        <Group $w={203.500}>
          <GroupBody>
            <ToolCol $ml={8.500}>
              <ToolRow $h={34}><CondIcon /><Fit w={148} ml={3}>Conditional Formatting</Fit><Caret $ml={3.500} /></ToolRow>
              <ToolRow $h={34}><TableIcon /><Fit w={98} ml={3}>Format as Table</Fit><Caret $ml={3.500} /></ToolRow>
              <ToolRow $h={34}><TableIcon cell /><Fit w={63.5} ml={3}>Cell Styles</Fit><Caret $ml={3.500} /></ToolRow>
            </ToolCol>
          </GroupBody>
          <GroupLabel><Fit w={35} ml={83.500}>Styles</Fit></GroupLabel>
        </Group>
        <Group $w={100.500}>
          <GroupBody>
            <ToolCol $ml={8}>
              <ToolRow $h={34}><InsertIcon /><Fit w={34.5} ml={4}>Insert</Fit><Caret $ml={12} /></ToolRow>
              <ToolRow $h={34}><InsertIcon del /><Fit w={39.5} ml={4}>Delete</Fit><Caret $ml={11} /></ToolRow>
              <ToolRow $h={34}><FormatIcon /><Fit w={45.5} ml={4}>Format</Fit><Caret $ml={3.500} /></ToolRow>
            </ToolCol>
          </GroupBody>
          <GroupLabel><Fit w={28.5} ml={34.500}>Cells</Fit></GroupLabel>
        </Group>
        <Group $w={92}>
          <GroupBody>
            <ToolCol $ml={8}>
              <ToolRow $h={34}><SigmaIcon /><Caret $ml={8} /><Item $ml={10}><SortIcon /></Item><Caret $ml={4} /></ToolRow>
              <ToolRow $h={34} $pl={1}><FillIcon /><Caret $ml={6} /><Item $ml={12}><FindIcon /></Item><Caret $ml={7} /></ToolRow>
              <ToolRow $h={34} $pl={1}><EraserIcon /><Caret $ml={6} /></ToolRow>
            </ToolCol>
          </GroupBody>
          <GroupLabel><Fit w={44} ml={22.500}>Editing</Fit></GroupLabel>
        </Group>
        <Group $w={82} $last>
          <GroupBody />
          <GroupLabel><Item $ml={65.500}><Chevron /></Item></GroupLabel>
        </Group>
      </Ribbon>
      <FormulaArea>
        <FormulaBox $w={121.500} $h={38} $ml={0} $pl={7}><Fit w={18.5}>G9</Fit><Caret $ml={78} $mt={5} $s={4.300} $c="#777" /></FormulaBox>
        <Dots $ml={17} $mt={11} />
        <FormulaBox $w={130.500} $h={38} $ml={17.500} $pl={15}>
          <Item $mt={1}><svg width="14" height="15" viewBox="0 0 14 15"><path d="m1 1 12 13M13 1 1 14" stroke="#c4c4c4" strokeWidth="2" /></svg></Item>
          <Item $ml={28} $mt={1}><svg width="16" height="15" viewBox="0 0 16 15"><path d="m1 8 5 5.500L15 1" fill="none" stroke="#c4c4c4" strokeWidth="2.500" /></svg></Item>
          <Item $ml={27} $mt={-3}><Fit w={14} size={19} italic font={`"Liberation Serif", serif`} weight={700} color="#555">fx</Fit></Item>
        </FormulaBox>
        <FormulaBox $w={767} $h={67.500} $ml={4.500} $pl={13}>
          <Fit w={75.500}>202010612</Fit>
          <Item $ml={663} $mt={4}><Chevron /></Item>
        </FormulaBox>
      </FormulaArea>
      <SheetArea>
        <SheetMain>
          <ColumnHeads>
            <Corner $w={24.500} />
            {COL_HEADS.map(([c, w]) => (
              <ColumnHead key={c} $w={w} $on={c === "G" || c === "H"}><Fit w={c === "M" ? 8 : c === "I" ? 3 : c === "J" ? 4 : 6} size={12} weight={600}>{c}</Fit></ColumnHead>
            ))}
          </ColumnHeads>
          <SheetBody>
            <RowHeads>
              {Array.from({ length: 59 }, (_, i) => i + 1).map((n) => (
                <RowHead key={n} $h={rowHeight(n)} $on={n === 9} $freeze={n === 17}><Fit w={n > 9 ? 11.5 : 6} size={13.3}>{String(n)}</Fit></RowHead>
              ))}
            </RowHeads>
            <Sheet />
            <SideData />
          </SheetBody>
        </SheetMain>
        <VScroll>
          <ScrollButton $w={18} $h={20}><Tri $d="u" /></ScrollButton>
          <VThumb />
          <ScrollButton $w={18} $h={21}><Tri $d="d" /></ScrollButton>
        </VScroll>
      </SheetArea>
      <TabBar>
        <Tri $d="l" $c={GREEN} $ml={32} />
        <Tri $d="r" $c={GREEN} $ml={30} />
        <Fit w={13} ml={24.500} size={16} bold color={GREEN}>...</Fit>
        <Rule $ml={10.500} $h={32} />
        <SheetTab $w={71} $ml={2} $bg="#ffff00" $edge="#f4f4a0"><Fit w={45} size={17.5} color="#333">lucapa</Fit></SheetTab>
        <Rule $ml={2} $h={32} />
        <SheetTab $w={73} $ml={2} $bg="#0070c0" $edge="#a8d0ec"><Fit w={48.5} size={17.5} color="#d8efff">grades</Fit></SheetTab>
        <ActiveTab $w={93} $ml={2}><Fit w={63.5} size={17.5} bold color="#3d7d45">bsbm-nc</Fit></ActiveTab>
        <SheetTab $w={133} $ml={2.500} $bg="#ffff00" $edge="#f4f4a0"><Fit w={105} size={17.5} color="#333">bsbm-new elec</Fit></SheetTab>
        <Rule $ml={2} $h={32} />
        <SheetTab $w={98} $ml={0}><Fit w={65.5} size={17.5} color="#666">student #</Fit></SheetTab>
        <Rule $ml={0.500} $h={32} />
        <SheetTab $w={58} $ml={3} $bg="#ffff00" $pl={12}><Fit w={47} size={17.5} color="#333">cantori</Fit></SheetTab>
        <Fit w={13} ml={10.500} size={16} bold color={GREEN}>...</Fit>
        <Item $ml={16}>
          <svg width="20" height="23" viewBox="0 0 20 23" fill="none" stroke="#777"><ellipse cx="10" cy="11.500" rx="9" ry="10.500" strokeWidth="1.200" /><path d="M10 6.500v10M5.500 11.500h9" strokeWidth="2" /></svg>
        </Item>
        <Dots $ml={24} />
        <HScroll>
          <ScrollButton $w={18} $h={21}><Tri $d="l" /></ScrollButton>
          <HThumb />
          <ScrollButton $w={18} $h={21}><Tri $d="r" /></ScrollButton>
        </HScroll>
      </TabBar>
      <StatusBar>
        <Fit w={310} ml={9} size={14}>Select destination and press ENTER or choose Paste</Fit>
        <ViewButton $ml={391} $w={45}>
          <svg width="16" height="16" viewBox="0 0 16 16" fill="none" stroke="#555" strokeWidth="1.200"><path d="M.7 1h14.600v14H.7zM.7 6h14.600M.7 10.500h14.600M5.500 1v14M10.500 1v14" /></svg>
        </ViewButton>
        <ViewButton $ml={0} $w={45}>
          <svg width="16" height="16" viewBox="0 0 16 16" fill="none" stroke="#555" strokeWidth="1.200"><path d="M.7 1h14.600v14H.7zM4 4.500h8V13H4zM6 7.500h4M6 10h4" /></svg>
        </ViewButton>
        <ViewButton $ml={0} $w={45} $on>
          <svg width="16" height="16" viewBox="0 0 16 16" fill="none" stroke="#555" strokeWidth="1.200"><path d="M.7 1h14.600v14H.7zM5.500 1v9h5V1M.7 10h5" /></svg>
        </ViewButton>
        <Slider />
        <Fit w={9} ml={88} size={16}>+</Fit>
        <Fit w={24} ml={20} size={13}>60%</Fit>
      </StatusBar>
    </Window>
  );
}

export default function App() {
  return (
    <>
      <Global />
      <Desktop>
        <Frame $ml={110} $mt={6} $w={1075} $h={1515} $bg="#fff">
          <Wallpaper $w={5} />
          <Excel />
        </Frame>
        <Frame $ml={38.500} $mt={0} $w={48.500} $h={1519} $bg="#3c3c3c">
          <Wallpaper $w={5} $tail />
          <Scaler $sx={1.08} $sy={0.981}><Excel /></Scaler>
        </Frame>
      </Desktop>
    </>
  );
}
